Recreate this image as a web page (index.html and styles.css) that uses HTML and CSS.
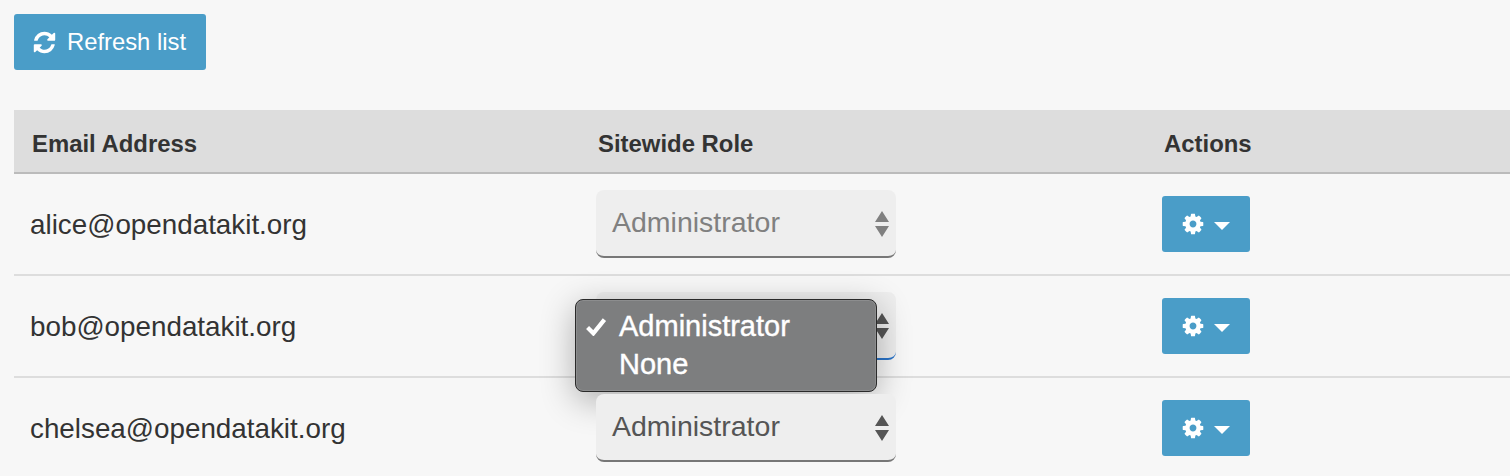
FILE: index.html
```html
<!DOCTYPE html>
<html lang="en">
<head>
<meta charset="utf-8">
<title>Users</title>
<link rel="stylesheet" href="styles.css">
</head>
<body>
<button class="btn refresh" type="button">
  <svg class="icon-refresh" viewBox="0 0 1792 1792"><path d="M1639 1056q0 5-1 7-64 268-268 434.5t-478 166.5q-146 0-282.5-55t-243.5-157l-129 129q-19 19-45 19t-45-19-19-45v-448q0-26 19-45t45-19h448q26 0 45 19t19 45-19 45l-137 137q71 66 161 102t187 36q134 0 250-65t186-179q11-17 53-117 8-23 30-23h192q13 0 22.5 9.5t9.5 22.5zm25-800v448q0 26-19 45t-45 19h-448q-26 0-45-19t-19-45 19-45l138-138q-148-137-349-137-134 0-250 65t-186 179q-11 17-53 117-8 23-30 23h-199q-13 0-22.5-9.5t-9.5-22.5v-7q65-268 270-434.5t480-166.5q146 0 284 55.5t245 156.5l130-129q19-19 45-19t45 19 19 45z"/></svg>
  <span>Refresh list</span>
</button>
<table class="users">
  <thead>
    <tr><th class="col-email">Email Address</th><th class="col-role">Sitewide Role</th><th class="col-actions">Actions</th></tr>
  </thead>
  <tbody>
    <tr>
      <td class="email">alice@opendatakit.org</td>
      <td class="role">
        <div class="select disabled"><span>Administrator</span>
          <svg class="arrows" viewBox="0 0 14 26"><path d="M7 0l7 11H0zM0 15h14L7 26z"/></svg>
        </div>
      </td>
      <td class="actions">
        <button class="btn gear" type="button" aria-label="Actions">
          <svg class="icon-cog" viewBox="0 0 1792 1792"><path d="M1152 896q0-106-75-181t-181-75-181 75-75 181 75 181 181 75 181-75 75-181zm512-109v222q0 12-8 23t-20 13l-185 28q-19 54-39 91 35 50 107 138 10 12 10 25t-9 23q-27 37-99 108t-94 71q-12 0-26-9l-138-108q-44 23-91 38-16 136-29 186-7 28-36 28h-222q-14 0-24.5-8.5t-11.5-21.5l-28-184q-49-16-90-37l-141 107q-10 9-25 9-14 0-25-11-126-114-165-168-7-10-7-23 0-12 8-23 15-21 51-66.5t54-70.5q-27-50-41-99l-183-27q-13-2-21-12.5t-8-23.5v-222q0-12 8-23t19-13l186-28q14-46 39-92-40-57-107-138-10-12-10-24 0-10 9-23 26-36 98.5-107.5t94.5-71.5q13 0 26 10l138 107q44-23 91-38 16-136 29-186 7-28 36-28h222q14 0 24.5 8.5t11.5 21.5l28 184q49 16 90 37l142-107q9-9 24-9 13 0 25 10 129 119 165 170 7 8 7 22 0 12-8 23-15 21-51 66.5t-54 70.5q26 50 41 98l183 28q13 2 21 12.5t8 23.5z"/></svg>
          <span class="caret"></span>
        </button>
      </td>
    </tr>
    <tr>
      <td class="email">bob@opendatakit.org</td>
      <td class="role">
        <div class="select focused"><span class="hidden-value">Administrator</span>
          <svg class="arrows" viewBox="0 0 14 26"><path d="M7 0l7 11H0zM0 15h14L7 26z"/></svg>
          <div class="menu">
            <div class="option"><svg class="check" viewBox="0 0 20 18"><path d="M2 10l5.500 5.500L18 2.500" /></svg>Administrator</div>
            <div class="option">None</div>
          </div>
        </div>
      </td>
      <td class="actions">
        <button class="btn gear" type="button" aria-label="Actions">
          <svg class="icon-cog" viewBox="0 0 1792 1792"><path d="M1152 896q0-106-75-181t-181-75-181 75-75 181 75 181 181 75 181-75 75-181zm512-109v222q0 12-8 23t-20 13l-185 28q-19 54-39 91 35 50 107 138 10 12 10 25t-9 23q-27 37-99 108t-94 71q-12 0-26-9l-138-108q-44 23-91 38-16 136-29 186-7 28-36 28h-222q-14 0-24.5-8.5t-11.5-21.5l-28-184q-49-16-90-37l-141 107q-10 9-25 9-14 0-25-11-126-114-165-168-7-10-7-23 0-12 8-23 15-21 51-66.5t54-70.5q-27-50-41-99l-183-27q-13-2-21-12.5t-8-23.5v-222q0-12 8-23t19-13l186-28q14-46 39-92-40-57-107-138-10-12-10-24 0-10 9-23 26-36 98.5-107.5t94.5-71.5q13 0 26 10l138 107q44-23 91-38 16-136 29-186 7-28 36-28h222q14 0 24.5 8.5t11.5 21.5l28 184q49 16 90 37l142-107q9-9 24-9 13 0 25 10 129 119 165 170 7 8 7 22 0 12-8 23-15 21-51 66.5t-54 70.5q26 50 41 98l183 28q13 2 21 12.5t8 23.5z"/></svg>
          <span class="caret"></span>
        </button>
      </td>
    </tr>
    <tr>
      <td class="email">chelsea@opendatakit.org</td>
      <td class="role">
        <div class="select"><span>Administrator</span>
          <svg class="arrows" viewBox="0 0 14 26"><path d="M7 0l7 11H0zM0 15h14L7 26z"/></svg>
        </div>
      </td>
      <td class="actions">
        <button class="btn gear" type="button" aria-label="Actions">
          <svg class="icon-cog" viewBox="0 0 1792 1792"><path d="M1152 896q0-106-75-181t-181-75-181 75-75 181 75 181 181 75 181-75 75-181zm512-109v222q0 12-8 23t-20 13l-185 28q-19 54-39 91 35 50 107 138 10 12 10 25t-9 23q-27 37-99 108t-94 71q-12 0-26-9l-138-108q-44 23-91 38-16 136-29 186-7 28-36 28h-222q-14 0-24.5-8.5t-11.5-21.5l-28-184q-49-16-90-37l-141 107q-10 9-25 9-14 0-25-11-126-114-165-168-7-10-7-23 0-12 8-23 15-21 51-66.5t54-70.5q-27-50-41-99l-183-27q-13-2-21-12.5t-8-23.5v-222q0-12 8-23t19-13l186-28q14-46 39-92-40-57-107-138-10-12-10-24 0-10 9-23 26-36 98.5-107.5t94.5-71.5q13 0 26 10l138 107q44-23 91-38 16-136 29-186 7-28 36-28h222q14 0 24.5 8.5t11.5 21.5l28 184q49 16 90 37l142-107q9-9 24-9 13 0 25 10 129 119 165 170 7 8 7 22 0 12-8 23-15 21-51 66.5t-54 70.5q26 50 41 98l183 28q13 2 21 12.5t8 23.5z"/></svg>
          <span class="caret"></span>
        </button>
      </td>
    </tr>
  </tbody>
</table>
</body>
</html>
```
FILE: styles.css
```css
* { box-sizing: border-box; }
html, body { height: 100%; }
body {
  margin: 0;
  padding: 14px 0 0 14px;
  background: #f7f7f7;
  color: #333;
  font-family: "Liberation Sans", Arial, sans-serif;
  overflow: hidden;
}
.btn {
  display: flex;
  align-items: center;
  justify-content: center;
  border: 0;
  border-radius: 3px;
  background: #4a9dc8;
  color: #fff;
  font-family: inherit;
  padding: 0;
}
.refresh {
  width: 192px;
  height: 56px;
  gap: 10px;
  padding-right: 2px;
  font-size: 23.800px;
}
.icon-refresh { width: 25px; height: 25px; fill: #fff; }
.users {
  width: 1496px;
  margin-top: 40px;
  border-collapse: collapse;
  table-layout: fixed;
}
.users th {
  height: 63px;
  padding: 5px 0 0 18px;
  background: #ddd;
  border-bottom: 2px solid #bbb;
  font-size: 23.900px;
  font-weight: 700;
  text-align: left;
}
.col-email { width: 566px; }
.col-role { width: 566px; }
.users td {
  height: 102px;
  padding: 0 0 0 16px;
  border-bottom: 2px solid #ddd;
  font-size: 27.800px;
}
.users td.email { padding-top: 2px; }
.select {
  position: relative;
  display: flex;
  align-items: center;
  justify-content: space-between;
  width: 300px;
  height: 68px;
  padding: 0 7px 1px 16px;
  border-bottom: 2px solid #777;
  border-radius: 8px;
  background: #eee;
  color: #555;
  font-size: 28.500px;
}
.arrows { width: 14px; height: 26px; fill: currentColor; margin-top: 2px; }
.select.disabled { color: #808080; }
.select.focused { border-bottom-color: #2a74c9; }
.hidden-value { visibility: hidden; }
.menu {
  position: absolute;
  left: -21px;
  top: 7px;
  width: 302px;
  height: 93px;
  padding: 7px 0;
  border: 1px solid #2a2a2a;
  border-radius: 8px;
  background: #7d7e7f;
  box-shadow: inset 0 0 0 1px #8c8d8e, 0 8px 34px rgba(0, 0, 0, .3);
  color: #fff;
  font-size: 29px;
  -webkit-text-stroke: .4px #fff;
}
.option {
  position: relative;
  height: 38px;
  line-height: 38px;
  padding-left: 43px;
}
.check {
  position: absolute;
  left: 9px;
  top: 10px;
  width: 22px;
  height: 19px;
  fill: none;
  stroke: #fff;
  stroke-width: 4;
}
.gear {
  width: 88px;
  height: 56px;
  gap: 9px;
  padding-right: 2px;
}
.icon-cog { width: 24px; height: 24px; fill: #fff; }
.caret {
  width: 0;
  height: 0;
  border-left: 8px solid transparent;
  border-right: 8px solid transparent;
  border-top: 8px solid #fff;
  margin-top: 3px;
}
```
